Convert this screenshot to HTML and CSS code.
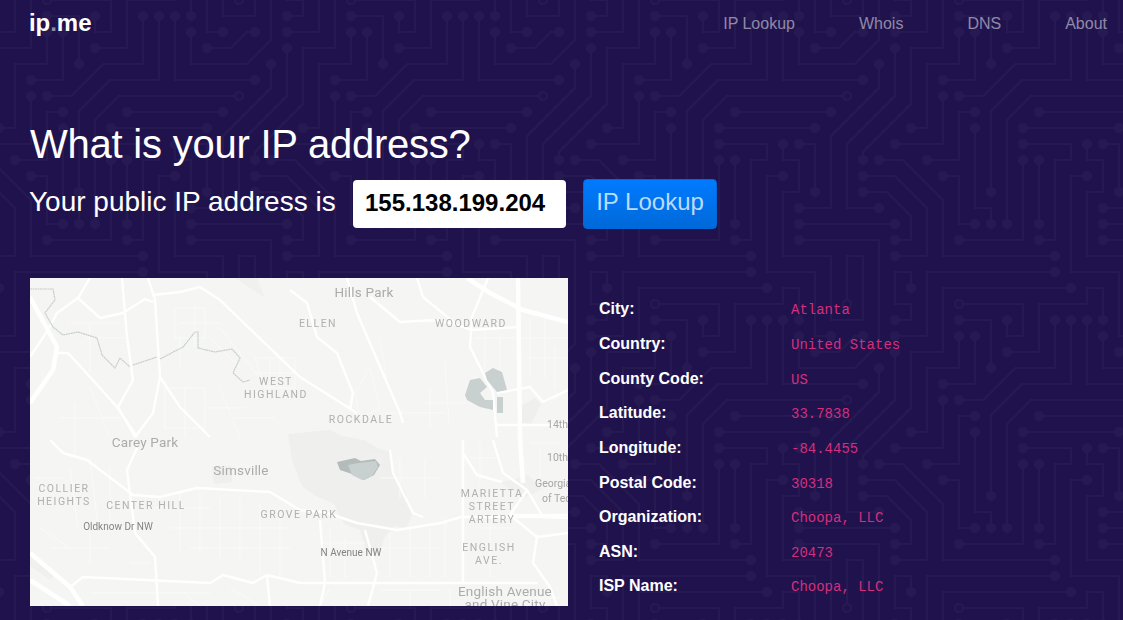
FILE: index.html
```html
<!DOCTYPE html>
<html lang="en">
<head>
<meta charset="utf-8">
<title>ip.me</title>
<link rel="stylesheet" href="styles.css">
</head>
<body>
<header class="nav">
  <a class="logo" href="#">ip<span class="logo-dot">.</span>me</a>
  <nav class="nav-links">
    <a href="#">IP Lookup</a>
    <a href="#">Whois</a>
    <a href="#">DNS</a>
    <a href="#">About</a>
  </nav>
</header>
<main class="main">
  <h1 class="title">What is your IP address?</h1>
  <div class="ip-row">
    <span class="ip-label">Your public IP address is</span>
    <input class="ip-input" type="text" value="155.138.199.204" readonly>
    <button class="ip-button" type="button">IP Lookup</button>
  </div>
  <section class="details">
    <div class="map">
      <svg class="map-svg" viewBox="0 0 538 328" width="538" height="328" xmlns="http://www.w3.org/2000/svg">
        <rect class="m-bg" width="538" height="328"/>
        <path class="m-park" d="M258 156l20-2 22-2 12 6 22 4 14 8 12 4 4 22 12 20 6 22-6 12-12-2-10 12-4 16-14-2-6-22-16-6-10-20-18-8-14-10-10-26z"/>
        <path class="m-park" d="M182 188h20v16l-18 2zM487 130l18-10 6 6-10 20-14-2z"/>
        <path class="m-park2" d="M0 288l20 14 4-4-24-22zM205 0l30 20-8-20zM470 205l28-8 14 14-16 8zM340 172l15 6-4 14-14 2z"/>
        <path class="m-minor" d="M145 30h30v30h-30zM150 60v30M165 30v40M40 45h50M55 60h40M60 45v50M150 45h40M180 60l30 30M190 50l40 50M225 80h40v30h-30zM240 80v30M250 80v30M225 95h40M30 140h60M45 125v50M60 110l20 50M75 140h20M135 110h40v40h-40zM155 110v50M175 130h40M190 110l20 50M205 140h40M350 60l8 50M325 115l15-25 10 40-20 10zM400 110v40M415 85l4 60M395 125h40M355 135h60M490 60h48M500 40v60M515 40v60M525 70v40M445 60h40M455 50v40M470 60v30M500 80h38M520 125l18-15M5 200h30M40 190l8 60M60 180l8 70M80 190v60M120 230h60M150 215v60M170 215v60M190 220v60M210 220v60M140 250h120M160 270h100M230 225v70M250 230v70M10 250l30 20M20 270h60M60 255v30M100 285h20M290 265h45M300 250v50M315 260v40M350 270h60M360 255v45M380 250v50M400 250v50M415 240v60M350 200h60M370 180v40M395 180v40M440 180h30M450 165v40M445 250h40M460 245v55M500 165h30M510 170v30M480 320h50M380 312v16M420 310v18M60 315h120M150 312l20 16M200 310l30 18M300 310l-10 18M350 312h60"/>
        <path class="m-road" d="M60 0L48 20 27 35 18 52 0 79M48 20l22 20 23-5 22-14 8 3M92 0l5 59 6 43-15 27 17 30M118 0l7 22 5 77-7 36-18 24M123 17l27-3 20-5 20 13 80 77 57 36M27 75h11l22 24 27 30 20 30M130 99l20 30 30 30M458 0l-16 39-2 30 23 46 4 44M387 0l6 19 34 28 15 5 45-3M340 19l30 25 37-2 20 5M317 0l10 35 43 100 3 10M260 12l17 13 10 34 20 16 16 40-3 17M467 115l33-6 13 15 25-12M467 147h71M20 162l13 13 24 7 46 35 27 2 37-9 73 4 30 18 24 2 33 11 40 7 44-7 20-6h90M107 170l-10 22 8 63 20 24 3 49M40 309l13-10 127 6 13-8 30 8 14-8 33 8h238M290 242l5 63-5 23M335 252l12 43-9 33M360 172l3 23 20 40 10 4M237 297l3 31M433 162v143M463 162l10 33 24 17-17 25 27 22-4 26 17 24 7 19M507 259l31-4M497 212l16 27 25 1M433 175l14 22 25 7M480 237h58"/>
        <path class="m-road-lg" d="M0 19l27 50-4 23L0 125M0 275l40 34 13 19M0 302l40 26M437 0l23 15 33 17 45 12M488 0l2 162 3 43"/>
        <path class="m-river" d="M0 11h23l2 11-10 13 8 14 10 8 15-3 19 6 5 17 13 13 5-10 10 9M103 87l24-8M130 81l23-12 12-15h3v16l17 4 17-3 8 9-7 15 10 9 7-2"/>
        <path class="m-lake-edge" d="M307 184l18-4 6 3 14-2 5 6-6 10-10 5-12-6-12-4z"/>
        <path class="m-lake" d="M318 187l10-2 18-2 2 6-6 9-10 4-10-5zM435 117l5-15 10-2 7 9-7 6 5 7h8v10l-13-3-13-7-2-5zM455 95l8-5 9 4 5 18-10 2-10-12zM467 119h6v16h-6z"/>
        <g class="m-label m-hood">
          <text x="288" y="49">ELLEN</text>
          <text x="441" y="49">WOODWARD</text>
          <text x="246" y="107">WEST</text>
          <text x="246" y="120">HIGHLAND</text>
          <text x="331" y="145">ROCKDALE</text>
          <text x="34" y="214">COLLIER</text>
          <text x="34" y="227">HEIGHTS</text>
          <text x="116" y="231">CENTER HILL</text>
          <text x="269" y="240">GROVE PARK</text>
          <text x="462" y="219">MARIETTA</text>
          <text x="462" y="232">STREET</text>
          <text x="462" y="245">ARTERY</text>
          <text x="459" y="273">ENGLISH</text>
          <text x="459" y="286">AVE.</text>
        </g>
        <g class="m-label m-place">
          <text x="334" y="19">Hills Park</text>
          <text x="115" y="169">Carey Park</text>
          <text x="211" y="197">Simsville</text>
          <text x="475" y="318">English Avenue</text>
          <text x="475" y="331">and Vine City</text>
        </g>
        <g class="m-label m-street">
          <text x="88" y="252">Oldknow Dr NW</text>
          <text x="321" y="278">N Avenue NW</text>
        </g>
        <g class="m-label m-small">
          <text x="517" y="150">14th</text>
          <text x="517" y="183">10th</text>
          <text x="505" y="209">Georgia</text>
          <text x="512" y="224">of Tech</text>
        </g>
      </svg>
    </div>
    <dl class="info">
      <dt>City:</dt><dd>Atlanta</dd>
      <dt>Country:</dt><dd>United States</dd>
      <dt>County Code:</dt><dd>US</dd>
      <dt>Latitude:</dt><dd>33.7838</dd>
      <dt>Longitude:</dt><dd>-84.4455</dd>
      <dt>Postal Code:</dt><dd>30318</dd>
      <dt>Organization:</dt><dd>Choopa, LLC</dd>
      <dt>ASN:</dt><dd>20473</dd>
      <dt>ISP Name:</dt><dd>Choopa, LLC</dd>
    </dl>
  </section>
</main>
</body>
</html>
```
FILE: styles.css
```css
* { box-sizing: border-box; }
html, body { height: 100%; }
body {
  margin: 0;
  overflow: hidden;
  color: #fff;
  font-family: "Liberation Sans", Arial, sans-serif;
  font-size: 16px;
  background-color: #20124d;
  background-position: -66px -1px;
  background-image: url("data:image/svg+xml,%3Csvg width='304' height='304' viewBox='0 0 304 304' xmlns='http://www.w3.org/2000/svg'%3E%3Cpath fill='%239C92AC' fill-opacity='0.06' d='M44.1 224a5 5 0 1 1 0 2H0v-2h44.1zm160 48a5 5 0 1 1 0 2H82v-2h122.1zm57.8-46a5 5 0 1 1 0-2H304v2h-42.1zm0 16a5 5 0 1 1 0-2H304v2h-42.1zm6.2-114a5 5 0 1 1 0 2h-86.2a5 5 0 1 1 0-2h86.2zm-256-48a5 5 0 1 1 0 2H0v-2h12.1zm185.8 34a5 5 0 1 1 0-2h86.2a5 5 0 1 1 0 2h-86.2zM258 12.1a5 5 0 1 1-2 0V0h2v12.1zm-64 208a5 5 0 1 1-2 0v-54.2a5 5 0 1 1 2 0v54.2zm48-198.2V80h62v2h-64V21.9a5 5 0 1 1 2 0zm16 16V64h46v2h-48V37.9a5 5 0 1 1 2 0zm-128 96V208h16v12.1a5 5 0 1 1-2 0V210h-16v-76.1a5 5 0 1 1 2 0zm-5.9-21.9a5 5 0 1 1 0 2H114v48H85.9a5 5 0 1 1 0-2H112v-48h12.1zm-6.2 130a5 5 0 1 1 0-2H176v-74.1a5 5 0 1 1 2 0V242h-60.1zm-16-64a5 5 0 1 1 0-2H114v48h10.1a5 5 0 1 1 0 2H112v-48h-10.1zM66 284.1a5 5 0 1 1-2 0V274H50v30h-2v-32h18v12.1zM236.1 176a5 5 0 1 1 0 2H226v94h48v32h-2v-30h-48v-98h12.1zm25.8-30a5 5 0 1 1 0-2H274v44.1a5 5 0 1 1-2 0V146h-10.1zm-64 96a5 5 0 1 1 0-2H208v-80h16v-14h-42.1a5 5 0 1 1 0-2H226v18h-16v80h-12.1zm86.2-210a5 5 0 1 1 0 2H272V0h2v32h10.1zM98 101.9V146H53.9a5 5 0 1 1 0-2H96v-42.1a5 5 0 1 1 2 0zM53.9 34a5 5 0 1 1 0-2H80V0h2v34H53.9zm60.1 3.9V66H82v64H69.9a5 5 0 1 1 0-2H80V64h32V37.9a5 5 0 1 1 2 0zM101.9 82a5 5 0 1 1 0-2H128V37.9a5 5 0 1 1 2 0V82h-28.1zm16-64a5 5 0 1 1 0-2H146v44.1a5 5 0 1 1-2 0V18h-26.1zm102.2 270a5 5 0 1 1 0 2H98v14h-2v-16h124.1zM242 149.9V160h16v34h-16v62h48v48h-2v-46h-48v-66h16v-30h-16v-12.1a5 5 0 1 1 2 0zM53.9 18a5 5 0 1 1 0-2H64V2H48V0h18v18H53.9zm112 32a5 5 0 1 1 0-2H192V0h50v2h-48v48h-28.1zm-48-48a5 5 0 0 1-9.8-2h2.07a3 3 0 1 0 5.66 0H178v34h-18V21.9a5 5 0 1 1 2 0V32h14V2h-58.1zm0 96a5 5 0 1 1 0-2H137l32-32h39V21.9a5 5 0 1 1 2 0V66h-40.17l-32 32H117.9zm28.1 90.1a5 5 0 1 1-2 0v-76.51L175.59 80H224V21.9a5 5 0 1 1 2 0V82h-49.59L146 112.41v75.69zm16 32a5 5 0 1 1-2 0v-99.51L184.59 96H300.1a5 5 0 0 1 3.9-3.9v2.07a3 3 0 0 0 0 5.66v2.07a5 5 0 0 1-3.9-3.9H185.41L162 121.41v98.69zm-144-64a5 5 0 1 1-2 0v-3.51l48-48V48h32V0h2v50H66v55.41l-48 48v2.69zM50 53.9v43.51l-48 48V208h26.1a5 5 0 1 1 0 2H0v-65.41l48-48V53.9a5 5 0 1 1 2 0zm-16 16V89.41l-34 34v-2.82l32-32V69.9a5 5 0 1 1 2 0zM12.1 32a5 5 0 1 1 0 2H9.41L0 43.41V40.6L8.59 32h3.51zm265.8 18a5 5 0 1 1 0-2h18.69l7.41-7.41v2.82L297.41 50H277.9zm-16 160a5 5 0 1 1 0-2H288v-71.41l16-16v2.82l-14 14V210h-28.1zm-208 32a5 5 0 1 1 0-2H64v-22.59L40.59 194H21.9a5 5 0 1 1 0-2H41.41L66 216.59V242H53.9zm150.2 14a5 5 0 1 1 0 2H96v-56.6L56.6 162H37.9a5 5 0 1 1 0-2h19.5L98 200.6V256h106.1zm-150.2 2a5 5 0 1 1 0-2H80v-46.59L48.59 178H21.9a5 5 0 1 1 0-2H49.41L82 208.59V258H53.9zM34 39.8v1.61L9.41 66H0v-2h8.59L32 40.59V0h2v39.8zM2 300.1a5 5 0 0 1 3.9 3.9H3.83A3 3 0 0 0 0 302.17V256h18v48h-2v-46H2v42.1zM34 241v63h-2v-62H0v-2h34v1zM17 18H0v-2h16V0h2v18h-1zm273-2h14v2h-16V0h2v16zm-32 273v15h-2v-14h-14v14h-2v-16h18v1zM0 92.1A5.02 5.02 0 0 1 6 97a5 5 0 0 1-6 4.9v-2.07a3 3 0 1 0 0-5.66V92.1zM80 272h2v32h-2v-32zm37.9 32h-2.07a3 3 0 0 0-5.66 0h-2.07a5 5 0 0 1 9.8 0zM5.9 0A5.02 5.02 0 0 1 0 5.9V3.83A3 3 0 0 0 3.83 0H5.9zm294.2 0h2.07A3 3 0 0 0 304 3.83V5.9a5 5 0 0 1-3.9-5.9zm3.9 300.1v2.07a3 3 0 0 0-1.83 1.83h-2.07a5 5 0 0 1 3.9-3.9z'/%3E%3C/svg%3E");
}
a { color: inherit; text-decoration: none; }

.nav {
  display: flex;
  justify-content: space-between;
  align-items: center;
  height: 46px;
  padding: 0 16px 0 29px;
}
.logo { font-size: 24px; font-weight: 700; line-height: 46px; letter-spacing: -.05px; }
.logo-dot { color: #8f8aa5; }
.nav-links { display: flex; gap: 64px; padding-top: 1px; color: rgba(255,255,255,.5); line-height: 46px; }

.main { padding: 0 30px; }
.title {
  margin: 0;
  padding-top: 72px;
  font-size: 40px;
  font-weight: 400;
  line-height: 52px;
  letter-spacing: -.23px;
}
.ip-row { display: flex; align-items: center; margin-top: 9px; height: 50px; }
.ip-label { font-size: 28px; width: 323px; margin-left: -1px; margin-right: 1px; padding-bottom: 4px; white-space: nowrap; }
.ip-input {
  width: 213px;
  height: 48px;
  margin-right: 17px;
  padding: 0 12px 3px;
  border: 0;
  border-radius: 4px;
  background: #fff;
  color: #000;
  font: 700 24px "Liberation Sans", Arial, sans-serif;
}
.ip-button {
  width: 134px;
  height: 50px;
  padding: 0 0 4px;
  border: 1px solid #0069d9;
  border-radius: 4px;
  background: linear-gradient(#007bff, #0069d9);
  color: #b9dbff;
  font: 400 24px "Liberation Sans", Arial, sans-serif;
}

.details { display: flex; margin-top: 49px; }
.map { width: 538px; height: 328px; flex: none; overflow: hidden; }
.map-svg { display: block; filter: blur(.4px); }
.m-bg { fill: #f5f5f4; }
.m-park { fill: #efefee; }
.m-park2 { fill: #f0f0ef; }
.m-minor { fill: none; stroke: #fafafa; stroke-width: 1; }
.m-road { fill: none; stroke: #fff; stroke-width: 2.4; stroke-linejoin: round; }
.m-road-lg { fill: none; stroke: #fff; stroke-width: 4.5; stroke-linejoin: round; }
.m-river { fill: none; stroke: #c6cdcd; stroke-width: 1.2; stroke-dasharray: 2 .5; }
.m-lake { fill: #c9d0d0; }
.m-lake-edge { fill: #b4bbbb; }
.m-label { font-family: Roboto, "Liberation Sans", sans-serif; text-anchor: middle; }
.m-hood { fill: #b0b0b0; font-size: 10.5px; letter-spacing: 1.5px; }
.m-place { fill: #acacac; font-size: 13.5px; letter-spacing: .2px; }
.m-street { fill: #848484; font-size: 10px; }
.m-small { fill: #a6a6a6; font-size: 10.5px; text-anchor: start; }

.info {
  display: grid;
  grid-template-columns: 192px auto;
  grid-auto-rows: 34.65px;
  justify-content: start;
  margin: 14px 0 0 31px;
  align-items: center;
}
.info dt { font-weight: 700; }
.info dd {
  margin: 0;
  padding-top: 2px;
  color: #d32f7c;
  font: 14px "Liberation Mono", "Courier New", monospace;
}
```
